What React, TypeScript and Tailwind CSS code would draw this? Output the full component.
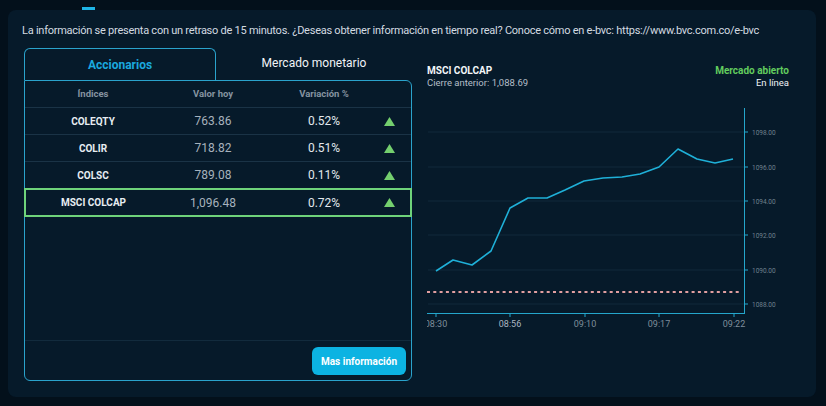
import React from "react"

interface Row {
  name: string
  value: string
  change: string
  active?: boolean
}

const ROWS: Row[] = [
  { name: "COLEQTY", value: "763.86", change: "0.52%" },
  { name: "COLIR", value: "718.82", change: "0.51%" },
  { name: "COLSC", value: "789.08", change: "0.11%" },
  { name: "MSCI COLCAP", value: "1,096.48", change: "0.72%", active: true },
]

// chart coords are relative to the svg origin (412, 100)
const POINTS: [number, number][] = [
  [24, 171], [41, 160], [60, 165], [79, 151], [98, 108], [116, 98], [135, 98], [153, 90],
  [172, 81], [191, 78], [210, 77], [228, 74], [247, 67], [266, 49], [285, 59], [303, 63], [321, 59],
]

const Y_TICKS: [number, string][] = [
  [32, "1098.00"],
  [67, "1096.00"],
  [101, "1094.00"],
  [135, "1092.00"],
  [170, "1090.00"],
  [204, "1088.00"],
]

const X_TICKS: [number, string][] = [
  [24, "08:30"],
  [98, "08:56"],
  [173, "09:10"],
  [247, "09:17"],
  [322, "09:22"],
]

function UpArrow() {
  return (
    <svg width="11" height="9" viewBox="0 0 11 9">
      <polygon points="5.5,0 11,9 0,9" fill="#74cf6e" />
    </svg>
  )
}

function Chart() {
  return (
    <svg width="389" height="240" viewBox="0 0 389 240" className="block">
      <defs>
        <clipPath id="plotClip">
          <rect x="15" y="0" width="374" height="240" />
        </clipPath>
      </defs>
      {Y_TICKS.map(([y]) => (
        <line key={y} x1="16" x2="332" y1={y} y2={y} stroke="#10293a" strokeWidth="1" />
      ))}
      <line x1="15" x2="330" y1="192" y2="192" stroke="#e19ea0" strokeWidth="2" strokeDasharray="3 3.3" />
      <polyline
        points={POINTS.map((p) => p.join(",")).join(" ")}
        fill="none"
        stroke="#1fb0d8"
        strokeWidth="1.6"
        strokeLinejoin="round"
      />
      <line x1="332.5" x2="332.5" y1="8" y2="213.5" stroke="#24a6cc" strokeWidth="1" />
      <line x1="15" x2="333" y1="213.5" y2="213.5" stroke="#24a6cc" strokeWidth="1" />
      {Y_TICKS.map(([y, label]) => (
        <g key={label}>
          <line x1="333" x2="336" y1={y} y2={y} stroke="#24a6cc" strokeWidth="1" />
          <text x="340" y={y + 2.5} fontSize="6.5" fill="#71828f" fontFamily="Roboto, sans-serif">
            {label}
          </text>
        </g>
      ))}
      <g clipPath="url(#plotClip)">
        {X_TICKS.map(([x, label]) => (
          <g key={label}>
            <line x1={x} x2={x} y1="213" y2="217" stroke="#24a6cc" strokeWidth="1" />
            <text
              x={x}
              y="227"
              fontSize="9"
              textAnchor="middle"
              fill={label === "08:56" ? "#aab6c1" : "#7f8e9b"}
              fontFamily="Roboto, sans-serif"
            >
              {label}
            </text>
          </g>
        ))}
      </g>
    </svg>
  )
}

export default function App() {
  return (
    <div
      className="h-[406px] w-[826px] overflow-hidden bg-[#03101b] px-[8px] pt-[7px]"
      style={{ fontFamily: "Roboto, 'Noto Sans', sans-serif" }}
    >
      <div className="ml-[74px] h-[3px] w-[13px] bg-[#1eb4e6]" />
      <div className="h-[387px] w-[808px] rounded-lg bg-[#061a2a]">
        <p className="whitespace-nowrap pl-[14px] pt-[13px] text-[11px] leading-[16px] tracking-[-0.25px] text-[#d3dae1]">
          La información se presenta con un retraso de 15 minutos. ¿Deseas obtener información en tiempo real? Conoce cómo en e-bvc: https://www.bvc.com.co/e-bvc
        </p>

        <div className="mt-[9px] flex pl-[16px]">
          <div className="flex w-[388px] flex-col">
            <div className="flex h-[32px]">
              <div className="flex w-[192px] items-center justify-center rounded-t-[6px] border border-b-0 border-[#2aa3cc] pt-[1px] text-[12px] font-bold text-[#1aa8de]">
                Accionarios
              </div>
              <div className="flex flex-1 items-center justify-center pb-[2px] text-[12px] text-[#f1f4f7]">
                Mercado monetario
              </div>
            </div>

            <div className="flex h-[301px] flex-col rounded-b-[6px] rounded-tr-[6px] border border-[#2aa3cc]">
              <div className="grid h-[27px] grid-cols-[136px_104px_118px_12px] items-center border-b border-[#1a3346] text-[9.5px] font-bold text-[#8593a0]">
                <span className="text-center">Índices</span>
                <span className="text-center">Valor hoy</span>
                <span className="text-center">Variación %</span>
                <span />
              </div>
              {ROWS.map((row) =>
                row.active ? (
                  <div
                    key={row.name}
                    className="-mx-[1px] -mt-[1px] grid h-[29px] grid-cols-[135px_104px_118px_12px] items-center border-2 border-[#6ed37a]"
                  >
                    <span className="text-center text-[10px] font-bold text-[#e7edf2]">{row.name}</span>
                    <span className="text-center text-[12px] text-[#a6b2bd]">{row.value}</span>
                    <span className="text-center text-[12px] text-[#e2e8ed]">{row.change}</span>
                    <span className="flex justify-center">
                      <UpArrow />
                    </span>
                  </div>
                ) : (
                  <div
                    key={row.name}
                    className="grid h-[27px] grid-cols-[136px_104px_118px_12px] items-center border-b border-[#1a3346]"
                  >
                    <span className="text-center text-[10px] font-bold text-[#e7edf2]">{row.name}</span>
                    <span className="text-center text-[12px] text-[#a6b2bd]">{row.value}</span>
                    <span className="text-center text-[12px] text-[#e2e8ed]">{row.change}</span>
                    <span className="flex justify-center">
                      <UpArrow />
                    </span>
                  </div>
                )
              )}
              <div className="flex-1" />
              <div className="flex justify-end border-t border-[#122b3d] pb-[5px] pr-[5px] pt-[6px]">
                <button className="flex h-[28px] w-[94px] items-center justify-center rounded-[6px] bg-[#0cb3e2] text-[10px] font-bold text-white">
                  Mas información
                </button>
              </div>
            </div>
          </div>

          <div className="flex-1">
            <div className="flex items-start justify-between pl-[15px] pr-[27px] pt-[17px]">
              <div className="leading-[12px]">
                <div className="text-[10px] font-bold text-[#f2f5f8]">MSCI COLCAP</div>
                <div className="text-[9.5px] text-[#b4bec8]">Cierre anterior: 1,088.69</div>
              </div>
              <div className="text-right leading-[12px]">
                <div className="text-[10px] font-bold text-[#62cc5e]">Mercado abierto</div>
                <div className="text-[9.5px] text-[#eef2f5]">En línea</div>
              </div>
            </div>
            <div className="mt-[11px]">
              <Chart />
            </div>
          </div>
        </div>
      </div>
    </div>
  )
}
